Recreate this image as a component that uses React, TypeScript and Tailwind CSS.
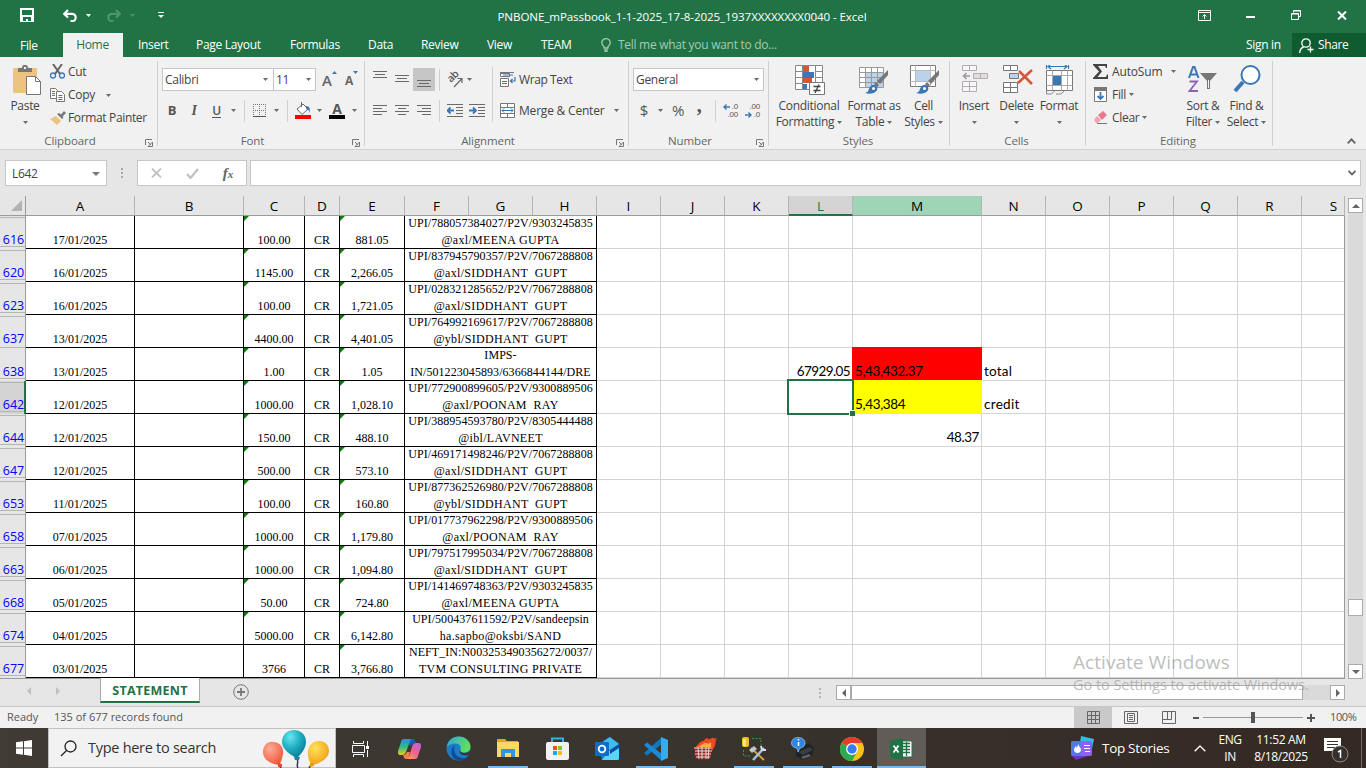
import React from "react";

type Kids = { children?: React.ReactNode };

function Svg({ w, h, children, className = "" }: Kids & { w: number; h: number; className?: string }) {
  return (
    <svg width={w} height={h} viewBox={`0 0 ${w} ${h}`} fill="none" className={`block shrink-0 ${className}`}>
      {children}
    </svg>
  );
}

function Caret({ className = "text-[#6a6a6a]" }: { className?: string }) {
  return (
    <Svg w={5} h={3} className={className}>
      <path d="M0 0h5L2.5 3z" fill="currentColor" />
    </Svg>
  );
}

function Slot({ w, children }: Kids & { w: string }) {
  return <div className={`flex shrink-0 items-center justify-center ${w}`}>{children}</div>;
}

const Sep = ({ className = "h-[22px]" }: { className?: string }) => (
  <div className={`w-px shrink-0 bg-[#d0d0d0] ${className}`} />
);

function Launcher() {
  return (
    <Svg w={8} h={8}>
      <path d="M.5 6V.5H7M3 3l3 3M7.5 3v4.5H3z" stroke="#777" />
    </Svg>
  );
}

function Group({ w, label, launcher, children }: Kids & { w: string; label: string; launcher?: boolean }) {
  return (
    <section className={`flex shrink-0 ${w}`}>
      <div className="flex min-w-0 flex-1 flex-col">
        <div className="flex h-[76px]">{children}</div>
        <div className="flex h-[16px] items-center pb-px">
          <div className={`flex-1 text-center text-[11.5px] tracking-[-0.1px] text-[#666] ${launcher ? "pr-[5px]" : "pr-[2px]"}`}>
            {label}
          </div>
          {launcher && (
            <div className="pt-1 pr-[4px]">
              <Launcher />
            </div>
          )}
        </div>
      </div>
      <div className="mt-1 h-[85px] w-px bg-[#d0d0d0]" />
    </section>
  );
}

function Big({ w, icon, a, b, caretBelow }: { w: string; icon: React.ReactNode; a: string; b?: string; caretBelow?: boolean }) {
  return (
    <div className={`flex shrink-0 flex-col items-center pt-[8px] ${w}`}>
      <div className="flex h-[33px] items-start">{icon}</div>
      <div className="flex h-4 items-center whitespace-nowrap">{a}</div>
      <div className="flex h-4 items-center gap-[3px] whitespace-nowrap">
        {b}
        <span className={caretBelow ? "" : "pt-px"}>
          <Caret />
        </span>
      </div>
    </div>
  );
}

function Lines({ rows, align, h = 12 }: { rows: number[]; align: "l" | "c" | "r"; h?: number }) {
  return (
    <Svg w={14} h={h}>
      {rows.map((len, i) => {
        const x = align === "l" ? 0 : align === "c" ? (14 - len) / 2 : 14 - len;
        return <rect key={i} x={x} y={i * 3 + (h - rows.length * 3)} width={len} height={1} fill="#6a6a6a" />;
      })}
    </Svg>
  );
}

function Indent({ right }: { right?: boolean }) {
  return (
    <Svg w={16} h={13}>
      <path d="M0 .5h16M9 3.5h7M9 6.5h7M9 9.5h7M0 12.5h16" stroke="#6a6a6a" />
      {right ? (
        <path d="M0 6.5h6M4 3.5l3 3-3 3" stroke="#3b77b5" strokeWidth="1.8" />
      ) : (
        <path d="M7 6.5H1M3.5 3.5l-3 3 3 3" stroke="#3b77b5" strokeWidth="1.8" />
      )}
    </Svg>
  );
}

function SmallArrow({ left }: { left?: boolean }) {
  return (
    <Svg w={7} h={6}>
      <path
        d={left ? "M7 3H1M3.5.5L1 3l2.5 2.5" : "M0 3h6M3.5.5L6 3 3.5 5.5"}
        stroke="#3b77b5"
        strokeWidth="1.4"
      />
    </Svg>
  );
}

function TitleBar() {
  return (
    <div className="flex h-[33px] items-center text-white">
      <Slot w="w-[54px]">
        <Svg w={14} h={14} className="-mt-[3px]">
          <path d="M0 0h14v14H0z" fill="#fff" />
          <path d="M2 2h10v5H2zM3 9h8v4H8v-2H6v2H3z" fill="#217346" />
        </Svg>
      </Slot>
      <div className="-mt-[3px] flex w-[140px] items-center pl-[9px]">
        <Svg w={14} h={13}>
          <path d="M5 1L1.2 4.8 5 8.5M1.5 4.8H9a3.7 3.7 0 010 7.4H7.5" stroke="#fff" strokeWidth="2.2" />
        </Svg>
        <div className="ml-[9px]">
          <Caret className="text-white" />
        </div>
        <Svg w={14} h={13} className="ml-4">
          <path d="M9 1l3.8 3.8L9 8.5M12.5 4.8H5a3.7 3.7 0 000 7.4h1.5" stroke="#4f946f" strokeWidth="2.2" />
        </Svg>
        <div className="ml-[9px]">
          <Caret className="text-[#4f946f]" />
        </div>
        <Svg w={6} h={7} className="ml-[23px]">
          <path d="M0 .5h6" stroke="#fff" />
          <path d="M0 3h6L3 6z" fill="#fff" />
        </Svg>
      </div>
      <div className="flex-1 pr-[11px] text-center text-[11.6px] tracking-[-0.1px] whitespace-nowrap">
        PNBONE_mPassbook_1-1-2025_17-8-2025_1937XXXXXXXX0040 - Excel
      </div>
      <div className="-mt-[3px] flex w-[185px] items-center">
        <Slot w="w-[46px]">
          <Svg w={13} h={11}>
            <path d="M.5.5h12v10H.5zM.5 2.5h12M6.5 9V4.5M4.5 6.5l2-2 2 2" stroke="#fff" />
          </Svg>
        </Slot>
        <Slot w="w-[46px]">
          <div className="mt-1 h-[2px] w-[9px] bg-white" />
        </Slot>
        <Slot w="w-[46px]">
          <Svg w={10} h={10}>
            <path d="M2.5 2.5v-2h7v6h-2M.5 3.5h7v6h-7zM.5 4h7M2.5 1h7" stroke="#fff" />
          </Svg>
        </Slot>
        <Slot w="w-[46px]">
          <Svg w={10} h={9}>
            <path d="M1 .5l8 8M9 .5l-8 8" stroke="#fff" strokeWidth="2" />
          </Svg>
        </Slot>
      </div>
    </div>
  );
}

function TabBar() {
  return (
    <nav className="flex h-6 items-center text-[12px] tracking-[-0.3px] whitespace-nowrap text-white">
      <div className="w-[63px] pt-px pl-5">File</div>
      <div className="flex h-6 w-[60px] items-center justify-center bg-[#f1f1f1] pr-px text-[#217346]">Home</div>
      <div className="w-[73px] pl-[15px]">Insert</div>
      <div className="w-[94px]">Page Layout</div>
      <div className="w-[78px]">Formulas</div>
      <div className="w-[53px]">Data</div>
      <div className="w-[66px]">Review</div>
      <div className="w-[54px]">View</div>
      <div className="w-[60px]">TEAM</div>
      <Svg w={10} h={14}>
        <path d="M3 10V8.6C1.5 7.5.8 6.3.8 4.8a4.2 4.2 0 018.4 0c0 1.5-.7 2.7-2.2 3.8V10zM3 11.8h4M3.5 13.4h3" stroke="#a3cbb3" strokeWidth="1.3" />
      </Svg>
      <div className="flex-1 pl-[7px] tracking-[-0.28px] text-[#a3cbb3]">Tell me what you want to do...</div>
      <div className="w-[46px]">Sign in</div>
      <div className="flex h-6 w-[74px] items-center bg-[#0e5c2f] pl-[7px]">
        <Svg w={15} h={15}>
          <circle cx="7" cy="5" r="4.2" stroke="#fff" strokeWidth="1.3" />
          <path d="M.7 15c.3-4 2-5.5 4-6M11.5 8.5v6M8.5 11.5h6" stroke="#fff" strokeWidth="1.3" />
        </Svg>
        <span className="pl-1 tracking-[-0.4px]">Share</span>
      </div>
    </nav>
  );
}

function ClipboardGroup() {
  return (
    <Group w="w-[158px]" label="Clipboard" launcher>
      <Big
        w="w-[50px]"
        a="Paste"
        caretBelow
        icon={
          <Svg w={29} h={31} className="ml-[3px]">
            <rect x="1" y="3" width="24" height="25" rx="1" fill="#ecc47f" />
            <path d="M6 3h4c0-4.5 6-4.5 6 0h4v4H6z" fill="#777" />
            <rect x="12" y="2" width="2" height="2" fill="#f1f1f1" />
            <path d="M14.5 11.5h9l5 5v13h-14z" fill="#fff" stroke="#777" />
            <path d="M23.5 11.5v5h5" stroke="#777" />
          </Svg>
        }
      />
      <div className="flex flex-col pt-[3px]">
        <div className="flex h-[23px] items-center">
          <Svg w={15} h={15}>
            <path d="M3 0l7 10M12 0L5 10" stroke="#666" strokeWidth="2" />
            <circle cx="3" cy="11.5" r="2.5" stroke="#3b77b5" strokeWidth="1.3" />
            <circle cx="12" cy="11.5" r="2.5" stroke="#3b77b5" strokeWidth="1.3" />
          </Svg>
          <span className="pl-[3px]">Cut</span>
        </div>
        <div className="flex h-[23px] items-center">
          <Svg w={15} h={14}>
            <path d="M.5.5h5l2 2v8h-7z" fill="#fff" stroke="#777" />
            <path d="M6.5 3.5h5l3 3v7h-8z" fill="#fff" stroke="#777" />
            <path d="M2 3.5h3M2 5.5h3M2 7.5h3M8.5 7.5h4M8.5 9.5h4M8.5 11.5h4" stroke="#3b77b5" />
          </Svg>
          <span className="w-[38px] pl-[3px]">Copy</span>
          <span className="pt-[1px] pl-[3px]">
            <Caret />
          </span>
        </div>
        <div className="flex h-[23px] items-center">
          <Svg w={16} h={14}>
            <path d="M0 8l6-3 5 5-4 4z" fill="#ecc47f" />
            <path d="M7 3l5 5 1.5-1.5-1-1L16 2l-2-2-3 3.5-2-1.5z" fill="#777" />
          </Svg>
          <span className="pl-[2px] tracking-[-0.35px] whitespace-nowrap">Format Painter</span>
        </div>
      </div>
    </Group>
  );
}

function FontGroup() {
  return (
    <Group w="w-[207px]" label="Font" launcher>
      <div className="flex flex-col pl-1 pt-[11px]">
        <div className="flex h-[23px] items-center">
          <div className="flex h-[23px] w-[112px] items-center justify-between border border-[#c6c6c6] bg-white pr-[5px] pl-[2px]">
            Calibri
            <Caret />
          </div>
          <div className="-ml-px flex h-[23px] w-[43px] items-center justify-between border border-[#c6c6c6] bg-white pr-[4px] pl-[2px]">
            11
            <Caret />
          </div>
          <div className="ml-[6px] flex w-[23px] pt-px text-[15px] font-semibold text-[#666]">
            A
            <Svg w={5} h={3} className="mt-[2px]">
              <path d="M0 3h5L2.5 0z" fill="#3b77b5" />
            </Svg>
          </div>
          <div className="flex pt-[2px] text-[12px] font-bold text-[#666]">
            A
            <Svg w={5} h={3} className="-mt-px">
              <path d="M0 0h5L2.5 3z" fill="#3b77b5" />
            </Svg>
          </div>
        </div>
        <div className="mt-[8px] flex h-[23px] items-center text-[#555]">
          <Slot w="w-[20px]">
            <b className="text-[13px]">B</b>
          </Slot>
          <Slot w="w-[24px]">
            <span className="font-['Liberation_Serif',serif] text-[14px] font-bold italic">I</span>
          </Slot>
          <Slot w="w-[21px]">
            <span className="border-b border-[#555] text-[12px] leading-[13px] font-semibold">U</span>
          </Slot>
          <Slot w="w-[12px]">
            <Caret />
          </Slot>
          <div className="w-[5px]" />
          <Sep />
          <Slot w="w-[29px]">
            <Svg w={13} h={13}>
              <path d="M.5 0v12M6.5 0v12M12.5 0v12M0 .5h13M0 6.5h13" stroke="#777" strokeDasharray="1 1" />
              <path d="M0 12.5h13" stroke="#555" />
            </Svg>
          </Slot>
          <Caret />
          <div className="w-[8px]" />
          <Sep />
          <div className="flex w-[29px] shrink-0 pl-[7px]">
            <Svg w={16} h={17}>
              <path d="M2 7l6-5 5 5-6 5.5z" fill="#fff" stroke="#666" />
              <path d="M6.5 5V0" stroke="#666" />
              <path d="M11 4c4 0 4 3 4 7-1-3-2-4-4-4z" fill="#3b77b5" />
              <path d="M0 13h16v4H0z" fill="#f00" />
            </Svg>
          </div>
          <Caret />
          <Slot w="w-[30px]">
            <div className="flex h-[17px] w-4 flex-col items-center border-b-4 border-black">
              <span className="text-[14px] leading-[13px] font-bold">A</span>
            </div>
          </Slot>
          <Caret />
        </div>
      </div>
    </Group>
  );
}

function AlignmentGroup() {
  return (
    <Group w="w-[264px]" label="Alignment" launcher>
      <div className="flex w-[127px] flex-col pt-[11px] pl-1">
        <div className="flex h-[23px] items-center">
          <Slot w="w-[22px]">
            <Svg w={14} h={15} className="-mt-[2px]">
              <path d="M0 .5h14M2 3.5h10M0 6.5h14" stroke="#6a6a6a" />
            </Svg>
          </Slot>
          <Slot w="w-[22px]">
            <Svg w={14} h={15}>
              <path d="M0 3.5h14M2 6.5h10M0 9.5h14" stroke="#6a6a6a" />
            </Svg>
          </Slot>
          <div className="flex h-[23px] w-[22px] items-center justify-center bg-[#c6c6c6]">
            <Svg w={14} h={15}>
              <path d="M0 8.5h14M2 11.5h10M0 14.5h14" stroke="#6a6a6a" />
            </Svg>
          </div>
          <div className="w-1" />
          <Sep />
          <div className="flex w-[27px] pl-[5px]">
            <Svg w={19} h={19}>
              <text transform="translate(6 13) rotate(-45)" fontSize="10.5" fontWeight="600" fill="#555" letterSpacing="-.5">
                ab
              </text>
              <path d="M9 17l8-8.5M12.5 8.500h4.500V13" stroke="#666" strokeWidth="1.200" />
            </Svg>
          </div>
          <Caret />
        </div>
        <div className="mt-[8px] flex h-[23px] items-center">
          <Slot w="w-[22px]">
            <Lines rows={[14, 9, 14, 9]} align="l" />
          </Slot>
          <Slot w="w-[22px]">
            <Lines rows={[14, 8, 14, 8]} align="c" />
          </Slot>
          <Slot w="w-[22px]">
            <Lines rows={[14, 9, 14, 9]} align="r" />
          </Slot>
          <div className="w-1" />
          <Sep />
          <div className="w-[7px]" />
          <Indent />
          <div className="w-[6px]" />
          <Indent right />
        </div>
      </div>
      <Sep className="mt-[10px] h-[55px]" />
      <div className="flex flex-col pt-[11px] pl-[7px]">
        <div className="flex h-[23px] items-center">
          <Svg w={16} h={15}>
            <path d="M.5 1.5h9v3h-9zM.5 6.5h8v8h-8z" fill="#fff" stroke="#777" />
            <path d="M2 9.5h5M2 11.5h5M3 3h10" stroke="#3b77b5" />
            <path d="M15 5v4h-4M12.5 7l-2 2 2 2" stroke="#3b77b5" strokeWidth="1.2" />
            <path d="M0 .5h14" stroke="#777" />
          </Svg>
          <span className="pl-[3px] tracking-[-0.4px]">Wrap Text</span>
        </div>
        <div className="mt-[8px] flex h-[23px] items-center">
          <Svg w={15} h={15}>
            <path d="M.5.5h14v14H.5zM.5 4.5h14M.5 10.5h14M7.5 0v4M7.5 11v4" fill="#fff" stroke="#777" />
            <path d="M2 7.5h11M4 5.5l-2 2 2 2M11 5.5l2 2-2 2" stroke="#3b77b5" />
          </Svg>
          <span className="w-[99px] pl-1 tracking-[-0.2px] whitespace-nowrap">Merge &amp; Center</span>
          <Caret />
        </div>
      </div>
    </Group>
  );
}

function NumberGroup() {
  return (
    <Group w="w-[140px]" label="Number" launcher>
      <div className="flex flex-col pt-[11px] pl-1">
        <div className="flex h-[23px] w-[131px] items-center justify-between border border-[#c6c6c6] bg-white pr-[4px] pl-[2px]">
          General
          <Caret />
        </div>
        <div className="mt-[8px] flex h-[23px] items-center text-[15px] text-[#555]">
          <Slot w="w-[22px]">$</Slot>
          <Slot w="w-[10px]">
            <Caret />
          </Slot>
          <div className="w-[4px]" />
          <Slot w="w-[18px]">
            <span className="tracking-[-0.5px]">%</span>
          </Slot>
          <Slot w="w-[24px]">
            <span className="-mt-[12px] font-['Liberation_Serif',serif] text-[20px] leading-[14px] font-bold">,</span>
          </Slot>
          <div className="w-[4px]" />
          <Sep />
          <div className="ml-[7px] flex w-[15px] flex-col text-[8px] leading-[8px] tracking-[-0.2px] font-['Liberation_Sans',sans-serif]">
            <span className="flex items-center justify-between">
              <SmallArrow left />
              .0
            </span>
            <span className="text-right">.00</span>
          </div>
          <div className="ml-[7px] flex w-[15px] flex-col text-[8px] leading-[8px] tracking-[-0.2px] font-['Liberation_Sans',sans-serif]">
            <span className="text-right">.00</span>
            <span className="flex items-center justify-between">
              <SmallArrow />
              .0
            </span>
          </div>
        </div>
      </div>
    </Group>
  );
}

function Brush() {
  return (
    <g>
      <path d="M29 5v5l-8 9-3-3z" fill="#777" />
      <path d="M17 17l3 3-2 2-3-3z" fill="#777" />
      <path d="M6 28c4-1 3-3 5-6 2-3 6-3 7 0 2 5-5 8-12 6z" fill="#3b77b5" />
      <circle cx="14.5" cy="23.5" r="1.5" fill="#fff" />
    </g>
  );
}

function StylesGroup() {
  return (
    <Group w="w-[181px]" label="Styles">
      <Big
        w="w-[80px]"
        a="Conditional"
        b="Formatting"
        icon={
          <Svg w={30} h={31} className="ml-[2px]">
            <path d="M.5.5h27v24H.5z" fill="#fff" />
            <path d="M8 1h6v6H8zM8 13h9v5H8z" fill="#d65532" />
            <path d="M8 7h11v6H8zM8 19h4v6H8z" fill="#3b77b5" />
            <path d="M.5.5h27v24H.5zM7.5.5v24M20.5.5v24M.5 6.5h7M.5 12.5h7M.5 18.5h7M20.5 6.5h7M20.5 12.5h7" stroke="#888" />
            <path d="M14.5 17.5h15v12h-15z" fill="#fff" stroke="#777" />
            <path d="M18.5 21.5h7M18.500 25.500h7M24 19.500l-4 8.500" stroke="#444" strokeWidth="1.300" />
          </Svg>
        }
      />
      <Big
        w="w-[50px]"
        a="Format as"
        b="Table"
        icon={
          <Svg w={30} h={31}>
            <path d="M.5 2.5h24v20H.5z" fill="#fff" />
            <path d="M7 8h17v14H7z" fill="#bcd1ea" />
            <path d="M.5 2.5h24v20H.5zM.5 7.5h24M.5 12.5h24M.5 17.5h24M6.5 2.5v20M12.5 2.5v20M18.5 2.5v20" stroke="#999" />
            <Brush />
          </Svg>
        }
      />
      <Big
        w="w-[49px]"
        a="Cell"
        b="Styles"
        icon={
          <Svg w={30} h={31} className="ml-[2px]">
            <path d="M.5.5h25v21H.5z" fill="#fff" stroke="#777" />
            <path d="M6 5h14v11H6z" fill="#bcd1ea" />
            <path d="M5.5.5v21M20.5.5v21M.5 5.5h25M.5 16.5h25" stroke="#bbb" />
            <Brush />
          </Svg>
        }
      />
    </Group>
  );
}

function CellsGroup() {
  return (
    <Group w="w-[136px]" label="Cells">
      <Big
        w="w-[48px]"
        a="Insert"
        caretBelow
        icon={
          <Svg w={28} h={29} className="ml-[2px]">
            <path d="M1.5.5h14v5h-14zM8.5.5v5M1.5 16.5h14v10h-14zM8.5 16.5v10M1.5 21.5h14" fill="#f8f6f8" stroke="#b0adb0" />
            <path d="M12.5 8.5h14v5h-14zM19.5 8.5v5" fill="#e4dde0" stroke="#b0adb0" />
            <path d="M9 11H3M5.5 8l-3 3 3 3" stroke="#999" strokeWidth="1.6" />
          </Svg>
        }
      />
      <Big
        w="w-[37px]"
        a="Delete"
        caretBelow
        icon={
          <Svg w={30} h={29} className="ml-[3px]">
            <path d="M.5.5h14v5H.5zM7.5.5v5M.5 17.5h14v10H.5zM7.5 17.5v10M.5 22.5h14" fill="#fff" stroke="#777" />
            <path d="M6.5 8.5h9v5h-9z" fill="#bcd1ea" stroke="#777" />
            <path d="M16 6l13 13M29 5L15 18" stroke="#d65532" strokeWidth="2.5" />
          </Svg>
        }
      />
      <Big
        w="w-[48px]"
        a="Format"
        caretBelow
        icon={
          <Svg w={28} h={31}>
            <g transform="translate(0 -1)">
              <path d="M1.5 0v5M23.5 0v5M3 2.5h19M6 0L3 2.5 6 5M19 0l3 2.5L19 5" stroke="#3b77b5" strokeWidth="1.2" />
              <path d="M1.5 6.5h26v20h-26z" fill="#fff" stroke="#777" />
              <path d="M7.5 6.5v20M16.5 6.5v20M22.5 6.5v20M1.5 11.5h26M1.5 21.5h26" stroke="#aaa" />
              <path d="M8 12h8v9H8z" fill="#3b77b5" />
              <path d="M1.5 26v4h5l3-3M11 30h5l3-3" stroke="#888" />
            </g>
          </Svg>
        }
      />
    </Group>
  );
}

function EditingGroup() {
  return (
    <Group w="w-[187px]" label="Editing">
      <div className="flex w-[94px] flex-col pt-[3px] pl-[7px]">
        <div className="flex h-[23px] items-center">
          <Svg w={15} h={15}>
            <path d="M0 0h14v4h-1l-1-2H5l4 5.5L4.5 13H13l1-2.5h1V15H0v-1l6-6.5L0 1z" fill="#444" />
          </Svg>
          <span className="w-[63px] pl-[4px] tracking-[-0.15px]">AutoSum</span>
          <Caret />
        </div>
        <div className="flex h-[23px] items-center">
          <Svg w={15} h={15}>
            <path d="M1.5.5h12v14h-12z" fill="#fff" stroke="#777" />
            <path d="M1 0h13v4H1z" fill="#777" />
            <path d="M7.5 5v7M4.5 9l3 3 3-3" stroke="#3b77b5" strokeWidth="1.8" />
          </Svg>
          <span className="pr-[3px] pl-[4px]">Fill</span>
          <Caret />
        </div>
        <div className="flex h-[23px] items-center">
          <Svg w={15} h={13}>
            <path d="M5 4l5-4 4 4-5 5z" fill="#e8798d" />
            <path d="M4 5l4 4-3 3H3L1 9z" fill="#f0a3b0" />
            <path d="M4 12.5h10" stroke="#777" />
          </Svg>
          <span className="pr-[3px] pl-[4px]">Clear</span>
          <Caret />
        </div>
      </div>
      <Big
        w="w-[46px]"
        a="Sort &"
        b="Filter"
        icon={
          <Svg w={30} h={30}>
            <path d="M1 13L5 2h1.5l4 11M2.5 9.5H9" stroke="#3b77b5" strokeWidth="2" />
            <path d="M1.5 16.5h7.5L1.5 26H10" stroke="#9060b8" strokeWidth="1.8" />
            <path d="M12 8h17l-7 8v8h-3v-8z" fill="#777" />
            <path d="M20.5 15v8" stroke="#f1f1f1" />
          </Svg>
        }
      />
      <Big
        w="w-[41px]"
        a="Find &"
        b="Select"
        icon={
          <Svg w={28} h={29}>
            <path d="M10 17L2 26" stroke="#3b77b5" strokeWidth="4" />
            <circle cx="17.5" cy="10" r="9" fill="#fff" stroke="#3b77b5" strokeWidth="2" />
          </Svg>
        }
      />
    </Group>
  );
}

function Ribbon() {
  return (
    <div className="flex h-[93px] border-b border-[#d2d2d2] bg-[#f1f1f1] text-[12px] tracking-[-0.3px] text-[#444]">
      <ClipboardGroup />
      <FontGroup />
      <AlignmentGroup />
      <NumberGroup />
      <StylesGroup />
      <CellsGroup />
      <EditingGroup />
      <div className="flex flex-1 items-end justify-end pr-[10px] pb-[5px]">
        <Svg w={9} h={6}>
          <path d="M.7 5.3l3.8-4 3.8 4" stroke="#666" strokeWidth="1.8" />
        </Svg>
      </div>
    </div>
  );
}

function FormulaBar() {
  return (
    <div className="flex h-[46px] bg-[#e6e6e6] pt-[10px] pr-[5px] pl-[5px]">
      <div className="flex h-[26px] w-[102px] items-center justify-between border border-[#c6c6c6] bg-white px-[6px] pt-px text-[12px] tracking-[-0.3px] text-[#444]">
        L642
        <Svg w={8} h={4}>
          <path d="M0 0h8L4 4z" fill="#777" />
        </Svg>
      </div>
      <div className="flex h-[26px] w-[30px] items-center justify-center">
        <Svg w={2} h={10}>
          <path d="M0 0h2v2H0zM0 4h2v2H0zM0 8h2v2H0z" fill="#aaa" />
        </Svg>
      </div>
      <div className="flex h-[26px] w-[110px] items-center border border-[#c6c6c6] bg-white">
        <Slot w="w-[36px]">
          <Svg w={11} h={10}>
            <path d="M1 .5l9 9M10 .5l-9 9" stroke="#c2c2c2" strokeWidth="1.8" />
          </Svg>
        </Slot>
        <Slot w="w-[36px]">
          <Svg w={13} h={11}>
            <path d="M1 6l3.5 4L12 1" stroke="#c2c2c2" strokeWidth="2.2" />
          </Svg>
        </Slot>
        <Slot w="w-[36px]">
          <span className="font-['Liberation_Serif',serif] text-[15px] leading-none font-bold text-[#666] italic">
            f<span className="text-[11px]">x</span>
          </span>
        </Slot>
      </div>
      <div className="ml-[3px] flex h-[26px] flex-1 items-center justify-end border border-[#c6c6c6] bg-white pr-[4px]">
        <Svg w={8} h={6}>
          <path d="M.5 1L4 4.5 7.5 1" stroke="#666" strokeWidth="1.8" />
        </Svg>
      </div>
    </div>
  );
}

const GRID =
  "grid grid-cols-[26px_109px_109px_61px_35px_65px_64px_64px_64px_64px_64px_64px_64px_129px_64px_64px_64px_64px_64px_43px]";

const COLS = ["A", "B", "C", "D", "E", "F", "G", "H", "I", "J", "K", "L", "M", "N", "O", "P", "Q", "R", "S"];

function ColumnHeads() {
  return (
    <div className={`${GRID} h-5 w-[1345px] bg-[#e6e6e6] text-black`}>
      <div className="flex items-end justify-end border-r border-b border-[#9b9b9b] pr-[3px] pb-[4px]">
        <Svg w={11} h={11}>
          <path d="M11 0v11H0z" fill="#b2b2b2" />
        </Svg>
      </div>
      {COLS.map((c) => {
        const tone =
          c === "M"
            ? "bg-[#9fd5b7] border-b border-b-[#9b9b9b] pt-[2px]"
            : c === "L"
              ? "bg-[#d4d4d4] border-b-2 border-b-[#217346] pt-[3px] text-[#217346]"
              : "border-b border-b-[#9b9b9b] pt-[2px]";
        return (
          <div
            key={c}
            className={`flex items-center justify-center border-r border-r-[#b5b5b5] text-[13.5px] leading-none ${tone} ${c === "S" ? "pl-[21px]" : ""}`}
          >
            {c}
          </div>
        );
      })}
    </div>
  );
}

type Row = [number, string, string, string, string, string];
const ROWS: Row[] = [
  [616, "17/01/2025", "100.00", "881.05", "UPI/788057384027/P2V/9303245835", "@axl/MEENA GUPTA"],
  [620, "16/01/2025", "1145.00", "2,266.05", "UPI/837945790357/P2V/7067288808", "@axl/SIDDHANT  GUPT"],
  [623, "16/01/2025", "100.00", "1,721.05", "UPI/028321285652/P2V/7067288808", "@axl/SIDDHANT  GUPT"],
  [637, "13/01/2025", "4400.00", "4,401.05", "UPI/764992169617/P2V/7067288808", "@ybl/SIDDHANT  GUPT"],
  [638, "13/01/2025", "1.00", "1.05", "IMPS-", "IN/501223045893/6366844144/DRE"],
  [642, "12/01/2025", "1000.00", "1,028.10", "UPI/772900899605/P2V/9300889506", "@axl/POONAM  RAY"],
  [644, "12/01/2025", "150.00", "488.10", "UPI/388954593780/P2V/8305444488", "@ibl/LAVNEET"],
  [647, "12/01/2025", "500.00", "573.10", "UPI/469171498246/P2V/7067288808", "@axl/SIDDHANT  GUPT"],
  [653, "11/01/2025", "100.00", "160.80", "UPI/877362526980/P2V/7067288808", "@ybl/SIDDHANT  GUPT"],
  [658, "07/01/2025", "1000.00", "1,179.80", "UPI/017737962298/P2V/9300889506", "@axl/POONAM  RAY"],
  [663, "06/01/2025", "1000.00", "1,094.80", "UPI/797517995034/P2V/7067288808", "@axl/SIDDHANT  GUPT"],
  [668, "05/01/2025", "50.00", "724.80", "UPI/141469748363/P2V/9303245835", "@axl/MEENA GUPTA"],
  [674, "04/01/2025", "5000.00", "6,142.80", "UPI/500437611592/P2V/sandeepsin", "ha.sapbo@oksbi/SAND"],
  [677, "03/01/2025", "3766", "3,766.80", "NEFT_IN:N003253490356272/0037/", "TVM CONSULTING PRIVATE"],
];

function Cell({ children, flag }: Kids & { flag?: boolean }) {
  return (
    <div className="relative flex items-end justify-center border-r border-b border-black leading-[15px]">
      {flag && <div className="absolute top-0 left-0 border-t-[5px] border-r-[5px] border-t-[#008000] border-r-transparent" />}
      {children}
    </div>
  );
}

function SideCell({ row, col }: { row: number; col: string }) {
  const base = "relative flex items-end border-r border-b border-[#d4d4d4] px-[2px] pb-px leading-[16px]";
  const filled = "relative -mt-px -ml-px flex items-end pb-[2px] pl-[3px] leading-[16px]";
  if (col === "L" && row === 638) return <div className={`${base} justify-end`}>67929.05</div>;
  if (col === "L" && row === 642)
    return (
      <div className={base}>
        <div className="absolute -top-[2px] -right-[2px] -bottom-[2px] -left-[2px] z-10 border-2 border-[#217346]" />
        <div className="absolute -right-[3px] -bottom-[3px] z-20 h-[6px] w-[6px] border-t border-l border-white bg-[#217346]" />
      </div>
    );
  if (col === "M" && row === 638) return <div className={`${filled} bg-[#ff0000] tracking-[-0.4px]`}>5,43,432.37</div>;
  if (col === "M" && row === 642) return <div className={`${filled} bg-[#ffff00] tracking-[-0.35px]`}>5,43,384</div>;
  if (col === "M" && row === 644) return <div className={`${base} justify-end tracking-[-0.45px]`}>48.37</div>;
  if (col === "N" && row === 638) return <div className={`${base} tracking-[0.2px]`}>total</div>;
  if (col === "N" && row === 642) return <div className={`${base} tracking-[0.3px]`}>credit</div>;
  return <div className={base} />;
}

function SheetRow({ r }: { r: Row }) {
  const [n, date, amt, bal, l1, l2] = r;
  const active = n === 642;
  return (
    <div
      className={`${GRID} h-[33px] w-[1345px] grid-rows-[33px] font-['Lato',sans-serif] text-[13.5px] tracking-[-0.6px] text-black`}
    >
      <div
        className={`flex flex-col ${active ? "border-r-2 border-[#217346] bg-[#d4d4d4]" : "border-r border-[#9b9b9b] bg-[#e6e6e6]"}`}
      >
        <div className={`mt-px h-px ${n === 638 ? "" : "bg-[#b5b5b5]"}`} />
        <div
          className={`flex h-[28px] items-end justify-end font-['Open_Sans','Noto_Sans',sans-serif] text-[12.5px] leading-[12px] tracking-[-0.1px] text-[#0000ff] ${active ? "" : "pr-px"}`}
        >
          {n}
        </div>
        <div className={`h-px ${n === 637 ? "" : "bg-[#b5b5b5]"}`} />
        <div className={`h-[2px] ${n === 637 ? "border-b border-[#b5b5b5]" : ""}`} />
      </div>
      <div className="col-span-8 grid grid-cols-[109px_109px_61px_35px_65px_192px] grid-rows-[33px] font-['Liberation_Serif',serif] text-[12px] tracking-normal">
        <Cell>{date}</Cell>
        <Cell />
        <Cell flag={n !== 677}>{amt}</Cell>
        <Cell>CR</Cell>
        <Cell flag>{bal}</Cell>
        <div className="flex flex-col items-center justify-end border-r border-b border-black text-[12px] leading-[17px] whitespace-pre">
          <span className="tracking-[0.06px]">{l1}</span>
          <span className={`-mb-px ${l2.length > 25 ? "tracking-[0.06px]" : "tracking-[0.32px]"}`}>{l2}</span>
        </div>
      </div>
      {COLS.slice(8).map((c) => (
        <SideCell key={c} row={n} col={c} />
      ))}
    </div>
  );
}

function ScrollButton({ d }: { d: string }) {
  return (
    <div className="flex h-[15px] w-[15px] shrink-0 items-center justify-center border border-[#ababab] bg-white">
      <Svg w={8} h={8}>
        <path d={d} fill="#666" />
      </Svg>
    </div>
  );
}

function Sheet() {
  return (
    <div className="flex h-[482px] bg-[#e6e6e6]">
      <div className="w-[1345px] bg-white">
        <ColumnHeads />
        <div className="h-[462px] w-[1345px] overflow-hidden border-r border-[#9b9b9b]">
          {ROWS.map((r) => (
            <SheetRow key={r[0]} r={r} />
          ))}
        </div>
      </div>
      <div className="z-10 -mb-px ml-[3px] flex w-[15px] flex-col bg-[#dadada]">
        <div className="h-[2px] bg-[#e6e6e6]" />
        <ScrollButton d="M0 6h8L4 2z" />
        <div className="h-[386px]" />
        <div className="h-[17px] border border-[#ababab] bg-white" />
        <div className="flex-1" />
        <ScrollButton d="M0 2h8L4 6z" />
      </div>
    </div>
  );
}

function SheetTabs() {
  return (
    <div className="flex h-[29px] border-b border-b-[#c6c6c6] bg-[#e6e6e6]">
      <div className="flex w-[100px] items-center border-t border-[#9b9b9b] pb-[3px] pl-[27px]">
        <Svg w={5} h={8}>
          <path d="M4 0v8L0 4z" fill="#c0c0c0" />
        </Svg>
        <Svg w={5} h={8} className="ml-6">
          <path d="M0 0v8l4-4z" fill="#c0c0c0" />
        </Svg>
      </div>
      <div className="flex h-[25px] w-[100px] items-center justify-center border-r border-b-2 border-l border-r-[#ababab] border-b-[#217346] border-l-[#ababab] bg-white pt-[4px] text-[12.5px] leading-none font-bold tracking-[0.25px] text-[#217346]">
        STATEMENT
      </div>
      <div className="flex w-[1145px] border-t border-[#9b9b9b]">
        <div className="flex flex-1 items-center pb-px pl-[33px]">
          <Svg w={16} h={16}>
            <circle cx="8" cy="8" r="7.3" stroke="#777" />
            <path d="M8 4v8M4 8h8" stroke="#777" strokeWidth="1.8" />
          </Svg>
        </div>
        <div className="flex items-center pr-[15px]">
          <Svg w={2} h={10}>
            <path d="M0 0h2v2H0zM0 4h2v2H0zM0 8h2v2H0z" fill="#b5b5b5" />
          </Svg>
        </div>
        <div className="mt-[6px] flex h-[15px] w-[509px] bg-[#dadada]">
          <ScrollButton d="M6 0v8L2 4z" />
          <div className="w-[452px] border border-[#ababab] bg-white" />
          <div className="flex-1" />
          <ScrollButton d="M2 0v8l4-4z" />
        </div>
      </div>
    </div>
  );
}

function StatusBar() {
  return (
    <div className="flex h-[21px] items-center bg-[#f1f1f1] text-[11px] text-[#555]">
      <div className="w-[54px] pl-[7px]">Ready</div>
      <div className="flex-1">135 of 677 records found</div>
      <div className="flex h-[21px] w-[38px] items-center justify-center bg-[#c9c9c9]">
        <Svg w={13} h={13}>
          <path d="M.5.5h12v12H.5zM.5 4.5h12M.5 8.5h12M4.5.5v12M8.5.5v12" stroke="#666" />
        </Svg>
      </div>
      <Slot w="w-[38px]">
        <Svg w={14} h={13}>
          <path d="M.5.5h13v12H.5zM3.5 2.5h7v8h-7zM5 4.5h4M5 6.5h4M5 8.5h4" stroke="#666" />
        </Svg>
      </Slot>
      <Slot w="w-[38px]">
        <Svg w={14} h={13}>
          <path d="M.5.5h13v12H.5zM5.5.5v8M.5 8.5h9v-8" stroke="#666" />
        </Svg>
      </Slot>
      <div className="flex w-[135px] items-center pl-[5px]">
        <div className="h-[2px] w-[6px] bg-[#555]" />
        <div className="ml-1 h-px w-[48px] bg-[#999]" />
        <div className="h-[11px] w-[4px] bg-[#555]" />
        <div className="mr-1 h-px w-[48px] bg-[#999]" />
        <Svg w={8} h={8}>
          <path d="M0 4h8M4 0v8" stroke="#555" strokeWidth="2" />
        </Svg>
      </div>
      <div className="w-[43px] pl-[7px] tracking-[-0.4px]">100%</div>
    </div>
  );
}

function Balloons() {
  return (
    <svg width="68" height="39" viewBox="0 0 68 39" fill="none">
      <defs>
        <radialGradient id="bt" cx=".35" cy=".25" r=".8">
          <stop stopColor="#6fe4ee" />
          <stop offset=".5" stopColor="#1fb0c4" />
          <stop offset="1" stopColor="#0b7796" />
        </radialGradient>
        <radialGradient id="br" cx=".35" cy=".3" r=".8">
          <stop stopColor="#ffab97" />
          <stop offset="1" stopColor="#ee5334" />
        </radialGradient>
        <radialGradient id="by" cx=".35" cy=".3" r=".8">
          <stop stopColor="#ffe15a" />
          <stop offset="1" stopColor="#ef9a12" />
        </radialGradient>
      </defs>
      <path d="M17 36l2 3M35 29c2 5-1 7 1 10M49 36l-2 3" stroke="#3c2c78" strokeWidth="1.5" />
      <path d="M1 23c0-7 5-11 10-10 7 0 11 6 10 12-1 5-2 9-4 11C9 35 1 31 1 23z" fill="url(#br)" />
      <path d="M46 22c1-7 6-10 11-10 7 0 10 5 10 10 0 7-9 13-17 14-2-2-5-8-4-14z" fill="url(#by)" />
      <path d="M20 13C20 5 26 1 32 1c7 0 12 5 12 12s-6 13-9 16c-7-3-15-9-15-16z" fill="url(#bt)" />
      <path d="M32 28l6 0-1 3h-4z" fill="#0e89a4" />
      <path d="M16 34l4 1v3h-4z" fill="#e64c2e" />
      <path d="M48 34h4v3l-4 1z" fill="#ef9a12" />
    </svg>
  );
}

const APPS: { name: string; state?: "open" | "active"; icon: React.ReactNode }[] = [
  {
    name: "task-view",
    icon: (
      <Svg w={17} h={16}>
        <path d="M1.5 0v2.5h10V0M1.5 16v-2.5h10V16M.5 4.5h12v7H.5zM15.5 0v5M15.5 9v7" stroke="#fff" />
        <path d="M14 5h3v3h-3z" fill="#fff" />
      </Svg>
    ),
  },
  {
    name: "copilot",
    icon: (
      <svg width="23" height="22" viewBox="0 0 23 22" fill="none">
        <defs>
          <linearGradient id="ca" x1="0" y1="0" x2="0" y2="1">
            <stop stopColor="#1796e6" />
            <stop offset=".5" stopColor="#32ba86" />
            <stop offset="1" stopColor="#f4cb1c" />
          </linearGradient>
          <linearGradient id="cb" x1="1" y1="0" x2="0" y2="1">
            <stop stopColor="#b264e8" />
            <stop offset=".5" stopColor="#f0628a" />
            <stop offset="1" stopColor="#ffae55" />
          </linearGradient>
        </defs>
        <path d="M6 1h9c2 0 2 2 3 4-3 0-4 1-5 3z" fill="#2455c4" />
        <path d="M6 1h8c-2 1-2 2-3 5l-3 8c-1 2-2 3-4 3H2c-2 0-2-2-2-4L3 4c.5-2 1-3 3-3z" fill="url(#ca)" />
        <path d="M17 21H8c2-1 3-2 4-5l2-7c1-3 2-4 4-4h3c2 0 2 2 2 4l-3 9c-.5 2-1 3-3 3z" fill="url(#cb)" />
        <path d="M8 21c-2 0-2-2-3-4 2 0 3-1 4-3h3l-1 4c-.5 2-1 3-3 3z" fill="#f5804a" />
      </svg>
    ),
  },
  {
    name: "edge",
    icon: (
      <svg width="25" height="25" viewBox="0 0 25 25" fill="none">
        <defs>
          <linearGradient id="ea" x1="0" y1="0" x2="1" y2=".4">
            <stop stopColor="#2ba6e0" />
            <stop offset="1" stopColor="#5fe05a" />
          </linearGradient>
        </defs>
        <circle cx="12.5" cy="12.5" r="12" fill="#1b7ccc" />
        <path d="M.7 11C2 4 7 .5 12.5.5c7 0 12 5 12 10 0 4-3 6-6 6-3 0-5-1-4-3 1-3-1-6-5-6-4 0-8 2-8.8 3.5z" fill="url(#ea)" />
        <path d="M9 9c-3 6 1 14 10 13 2 0 3-1 4-2-3 4-8 5-12 4-6-1-8-12-2-15z" fill="#134b93" />
        <path d="M14.500 13.500c-1 2 1 3.500 4 3.500 2.500 0 4.500-.7 6-3-.3 2-.8 3.500-2 5-5 1.500-11-1-8-5.500z" fill="#3b3630" />
      </svg>
    ),
  },
  {
    name: "explorer",
    state: "open",
    icon: (
      <Svg w={22} h={19}>
        <path d="M0 0h8l2 2h11v16H0z" fill="#e5a518" />
        <path d="M0 3h22v15H0z" fill="#ffd766" />
        <path d="M4 10h14v8h-4v-4H8v4H4z" fill="#3492e0" />
      </Svg>
    ),
  },
  {
    name: "store",
    icon: (
      <Svg w={23} h={23}>
        <path d="M6 6V1.5h11V6" stroke="#2fb4e8" strokeWidth="2" />
        <rect y="5" width="23" height="18" rx="2" fill="#f2f2f2" />
        <path d="M7 9h4v4H7z" fill="#f1511b" />
        <path d="M12 9h4v4h-4z" fill="#80cc28" />
        <path d="M7 14h4v4H7z" fill="#00adef" />
        <path d="M12 14h4v4h-4z" fill="#fbbc09" />
      </Svg>
    ),
  },
  {
    name: "outlook",
    icon: (
      <Svg w={24} h={23}>
        <path d="M4 7l10-7 10 7v16H7z" fill="#1681d5" />
        <path d="M8 5l7-5 9 7-9 6z" fill="#41bcf0" />
        <path d="M14 14l10-7v14c0 1-1 2-2 2H7z" fill="#5ad5f7" />
        <path d="M15 13l9-6v4l-9 6z" fill="#0b4fa0" />
        <rect y="5" width="14" height="14" rx="1" fill="#0f6cc9" />
        <circle cx="7" cy="12" r="3.3" stroke="#fff" strokeWidth="1.8" />
      </Svg>
    ),
  },
  {
    name: "vscode",
    state: "open",
    icon: (
      <Svg w={24} h={24}>
        <path d="M18 0v7L3 18.5 0 16z" fill="#1278bd" />
        <path d="M18 24v-7L3 5.5 0 8z" fill="#1a8ad4" />
        <path d="M17 0l7 3v18l-7 3z" fill="#35abf0" />
      </Svg>
    ),
  },
  {
    name: "database-burner",
    icon: (
      <Svg w={24} h={23}>
        <path d="M3 9c3-1 3-5 7-5 2 0 1-3 5-3-1 2 2 1 4 0 3-1 1 2 5 0-2 3-1 5-2 8l-3 5H5z" fill="#ed4b1f" />
        <path d="M6 9c2 0 4-3 6-3s4 2 6-1c0 4 1 6-1 9H8z" fill="#ffad4a" />
        <path d="M1 10h18l-1 11c-4 2-12 2-16 0z" fill="#8c2620" />
        <path d="M1 11h18M2 14h17M2 17h16M3 20h14M5 10l1 12M9 10v12M13 10v12M16 10l-1 12" stroke="#e8dcd8" />
      </Svg>
    ),
  },
  {
    name: "toolkit",
    state: "open",
    icon: (
      <Svg w={24} h={24}>
        <rect x="0" y="0" width="7" height="10" rx="2" fill="#f0bd28" />
        <path d="M1 2h3v7H1z" fill="#ffe68a" />
        <path d="M10 1.5h9v8M1.5 13v6H8" stroke="#3f9a38" strokeDasharray="2 1.5" />
        <path d="M9 11l13 12" stroke="#d8a23c" strokeWidth="2" />
        <path d="M22 11L11 23" stroke="#a9c3de" strokeWidth="2.5" />
        <path d="M7 13l5-4 3 3-5 4z" fill="#bfc8d2" />
        <path d="M19 9l1 4 4 0" stroke="#d5dde5" strokeWidth="2" />
      </Svg>
    ),
  },
  {
    name: "printer-info",
    state: "open",
    icon: (
      <Svg w={24} h={24}>
        <path d="M5 13l13-7 5 5-2 8-9 4-7-4z" fill="#202326" />
        <path d="M7 15l12-5 3 3-10 5z" fill="#3a3e43" />
        <path d="M10 20l8-3 2 2-8 3z" fill="#5d6267" />
        <path d="M7 .5c4 0 7 2 7 5.500s-3 5-5 5l-2 4-1-4C3 11 .5 9 .5 6 .5 3 3 .5 7 .5z" fill="#3185e0" stroke="#9dc8f5" strokeWidth=".7" />
        <path d="M7.5 2v1.5M7.5 5v4" stroke="#fff" strokeWidth="1.5" />
      </Svg>
    ),
  },
  {
    name: "chrome",
    state: "open",
    icon: (
      <Svg w={24} h={24}>
        <circle cx="12" cy="12" r="12" fill="#fbc116" />
        <path d="M12 12L1.6 6A12 12 0 0122.4 6z" fill="#e33b2e" />
        <path d="M12 12L1.6 6A12 12 0 0012 24l5-9z" fill="#2da94f" />
        <path d="M12 6h10.4L17 15l-5-3z" fill="#fbc116" />
        <circle cx="12" cy="12" r="6" fill="#fff" />
        <circle cx="12" cy="12" r="4.7" fill="#3a7cec" />
      </Svg>
    ),
  },
  {
    name: "excel",
    state: "active",
    icon: (
      <Svg w={23} h={22}>
        <path d="M11 3h11v16H11z" fill="#fff" stroke="#1f7244" />
        <path d="M13 5.5h7M13 8.5h7M13 11.5h7M13 14.5h7M16.5 4v14" stroke="#1f7244" strokeWidth="1.3" />
        <path d="M0 2.5L13 0v22L0 19.5z" fill="#1f7244" />
        <path d="M3.5 7.5l5 7M8.5 7.5l-5 7" stroke="#fff" strokeWidth="1.7" />
      </Svg>
    ),
  },
];

function Taskbar() {
  return (
    <div className="flex h-10 bg-gradient-to-r from-[#403b35] via-[#39342e] to-[#342922] text-white">
      <Slot w="w-[48px]">
        <Svg w={16} h={16}>
          <path d="M0 2.3l7-1v6.2H0zM8 1.2L16 0v7.5H8zM0 8.5h7v6.2l-7-1zM8 8.5h8V16l-8-1.2z" fill="#fff" />
        </Svg>
      </Slot>
      <div className="flex w-[288px] items-center border border-[#c0c0c0] bg-[#f2f2f2]">
        <Svg w={17} h={17} className="ml-[11px]">
          <circle cx="10.5" cy="6.5" r="5.5" stroke="#222" strokeWidth="1.3" />
          <path d="M6.5 10.5L1 16" stroke="#222" strokeWidth="1.3" />
        </Svg>
        <span className="flex-1 pl-[11px] text-[14.5px] tracking-[-0.28px] whitespace-nowrap text-[#333]">Type here to search</span>
        <div className="mr-[5px]">
          <Balloons />
        </div>
      </div>
      {APPS.map((a) => (
        <div
          key={a.name}
          className={`flex w-[49.2px] shrink-0 flex-col items-center ${a.state === "active" ? "bg-[#615c57]" : ""}`}
        >
          <div className="flex flex-1 items-center pt-px">{a.icon}</div>
          <div className={`-mt-[2px] h-[2px] ${a.state === "active" ? "w-full bg-[#76b9ed]" : a.state ? "w-10 bg-[#76b9ed]" : ""}`} />
        </div>
      ))}
      <div className="flex flex-1 items-center justify-end">
        <Svg w={24} h={24}>
          <path d="M11 0l13 3-3 14-12-3z" fill="#31bfdc" />
          <path d="M2 20h16l-12 4z" fill="#6a35c2" />
          <rect x="1" y="5" width="21" height="15" rx="2" fill="#9160f2" />
          <path d="M1 7c0-1 1-2 2-2h8v15H3c-1 0-2-1-2-2z" fill="#5476ec" />
          <path d="M8 7c0 3 3 4 3 7 0 2-2 3-3.5 3S4 16 4 14c0-2 1-2 1.5-4 1 0 1 1 1 2 1-1 1.5-3 1.5-5z" fill="#fff" />
          <path d="M14 9.5h6M14 12.5h6M15 15.5h5" stroke="#fff" />
        </Svg>
        <span className="w-[100px] pl-2 text-[13.5px] tracking-[-0.3px] whitespace-nowrap">Top Stories</span>
        <Svg w={12} h={7}>
          <path d="M.7 6.3L6 1l5.3 5.3" stroke="#fff" strokeWidth="1.3" />
        </Svg>
        <div className="ml-[3px] flex w-[42px] flex-col items-center text-[12px] leading-[17px] tracking-[-0.5px]">
          <span>ENG</span>
          <span>IN</span>
        </div>
        <div className="flex w-[60px] flex-col items-center text-[12px] leading-[17px] tracking-[-0.35px] whitespace-nowrap">
          <span>11:52 AM</span>
          <span>8/18/2025</span>
        </div>
        <Svg w={26} h={26} className="mt-[6px] ml-[13px]">
          <path d="M0 0h17v13h-6l-3 3v-3H0z" fill="#fff" />
          <path d="M3 3.5h11M3 6.5h11M3 9.5h8" stroke="#3a302a" />
          <circle cx="16" cy="16" r="8" fill="#35302c" stroke="#8d8985" />
          <path d="M14 14l2.5-1.5V20" stroke="#fff" strokeWidth="1.5" />
        </Svg>
        <div className="ml-[11px] h-10 w-px bg-[#6f6a65]" />
        <div className="w-1" />
      </div>
    </div>
  );
}

export default function App() {
  return (
    <div className="relative flex h-[768px] w-[1366px] flex-col overflow-hidden bg-[#e6e6e6] font-['Open_Sans','Noto_Sans',sans-serif]">
      <header className="bg-[#217346]">
        <TitleBar />
        <TabBar />
      </header>
      <Ribbon />
      <FormulaBar />
      <Sheet />
      <SheetTabs />
      <StatusBar />
      <Taskbar />
      <div className="pointer-events-none absolute top-[650px] left-[1073px] z-30 whitespace-nowrap text-[#a0a0a0]/70">
        <div className="text-[19px] leading-6 tracking-[0.05px]">Activate Windows</div>
        <div className="text-[14.5px] leading-[22px] tracking-[-0.05px]">Go to Settings to activate Windows.</div>
      </div>
    </div>
  );
}
